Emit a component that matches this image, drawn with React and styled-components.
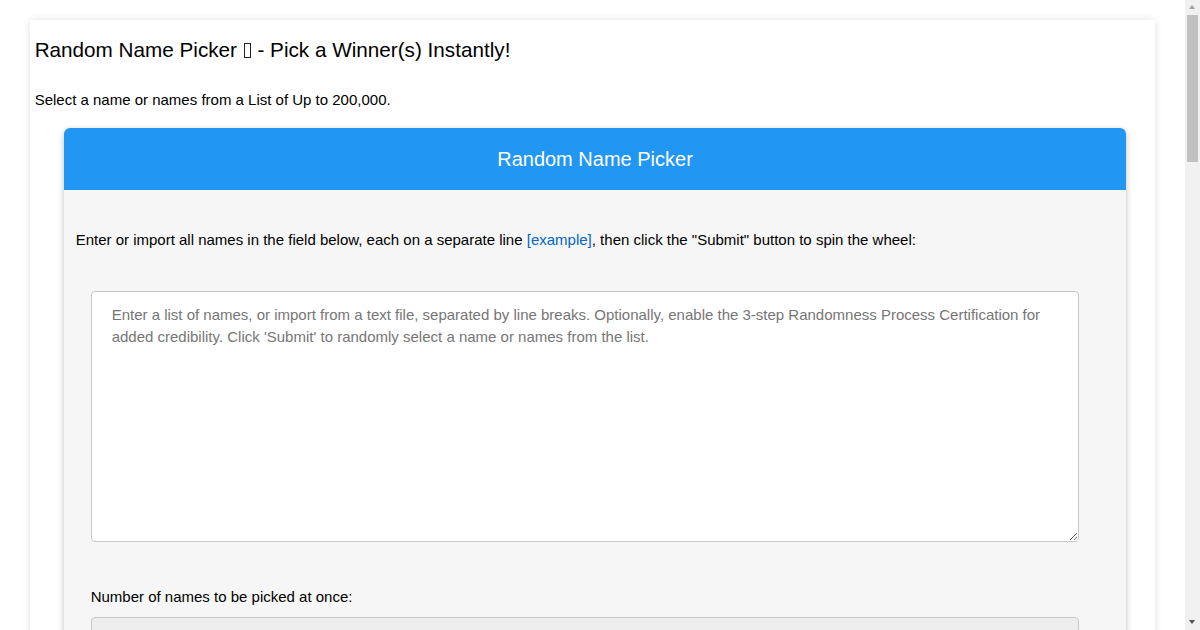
import React from "react";
import styled, { createGlobalStyle } from "styled-components";

const GlobalStyle = createGlobalStyle`
  html, body {
    margin: 0;
    padding: 0;
    background: #ffffff;
    font-family: "Liberation Sans", Arial, sans-serif;
    color: #000;
  }
  body {
    padding-right: 15px;
  }
`;

const Page = styled.div`
  width: 95%;
  margin: 20px auto 40px;
  padding: 12px 5px 30px;
  box-sizing: border-box;
  background: #fff;
  box-shadow: 0 0 8px rgba(0, 0, 0, 0.12);
`;

const Title = styled.h1`
  font-size: 20.7px;
  font-weight: normal;
  line-height: 36px;
  margin: 0 0 22px;
`;

const Tofu = styled.span`
  display: inline-block;
  width: 5px;
  height: 13px;
  border: 1px solid #222;
  vertical-align: -1px;
  margin: 0 1px;
`;

const Lead = styled.p`
  font-size: 15px;
  line-height: 20px;
  margin: 0 0 18px;
`;

const Card = styled.div`
  margin: 0 24px 0 29px;
  border-radius: 6px;
  background: #f6f6f6;
  box-shadow: 0 2px 6px rgba(0, 0, 0, 0.25);
  overflow: hidden;
`;

const CardHeader = styled.div`
  background: #2196f3;
  color: #fff;
  height: 62px;
  display: flex;
  align-items: center;
  justify-content: center;
  font-size: 20px;
`;

const CardBody = styled.div`
  padding: 40px 12px 40px;
`;

const Intro = styled.p`
  font-size: 15px;
  line-height: 20px;
  margin: 0 0 41px;

  a {
    color: #0066cc;
    text-decoration: none;
  }
`;

const Field = styled.div`
  margin: 0 35px 0 15px;
`;

const Names = styled.textarea`
  display: block;
  width: 100%;
  height: 251px;
  box-sizing: border-box;
  padding: 12px 20px;
  border: 1px solid #c8c8c8;
  border-radius: 4px;
  background: #fff;
  font-family: "Liberation Sans", Arial, sans-serif;
  font-size: 15px;
  line-height: 22px;
  resize: vertical;
  outline: none;

  &::placeholder {
    color: #767676;
  }
`;

const Label = styled.label`
  display: block;
  font-size: 15px;
  line-height: 20px;
  margin: 45px 0 10px;
`;

const NumberInput = styled.input`
  display: block;
  width: 100%;
  height: 40px;
  box-sizing: border-box;
  border: 1px solid #c8c8c8;
  border-radius: 4px;
  background: #eeeeee;
  padding: 0 12px;
  font-family: "Liberation Sans", Arial, sans-serif;
  font-size: 15px;
`;

const SubmitButton = styled.button`
  margin-top: 30px;
  padding: 12px 28px;
  border: none;
  border-radius: 4px;
  background: #2196f3;
  color: #fff;
  font-family: "Liberation Sans", Arial, sans-serif;
  font-size: 16px;
`;

/* window scrollbar, drawn over the right edge */
const ScrollTrack = styled.div`
  position: fixed;
  top: 0;
  right: 0;
  width: 15px;
  height: 100vh;
  background: #f1f1f1;
`;

const ScrollThumb = styled.div`
  position: absolute;
  top: 15px;
  left: 2px;
  width: 11px;
  height: 147px;
  background: #c1c1c1;
`;

const Arrow = styled.div`
  position: absolute;
  left: 4px;
  width: 0;
  height: 0;
  border-left: 3.5px solid transparent;
  border-right: 3.5px solid transparent;
  ${(p) =>
    p.$down
      ? `bottom: 6px; border-top: 4px solid #505050;`
      : `top: 5px; border-bottom: 4px solid #a3a3a3;`}
`;

const App = () => {
  return (
    <>
      <GlobalStyle />
      <Page>
        <Title>
          Random Name Picker <Tofu aria-label="🏆" /> - Pick a Winner(s) Instantly!
        </Title>
        <Lead>Select a name or names from a List of Up to 200,000.</Lead>
        <Card>
          <CardHeader>Random Name Picker</CardHeader>
          <CardBody>
            <Intro>
              Enter or import all names in the field below, each on a separate line{" "}
              <a href="#example">[example]</a>, then click the "Submit" button to spin the wheel:
            </Intro>
            <Field>
              <Names placeholder="Enter a list of names, or import from a text file, separated by line breaks. Optionally, enable the 3-step Randomness Process Certification for added credibility. Click 'Submit' to randomly select a name or names from the list." />
              <Label>Number of names to be picked at once:</Label>
              <NumberInput type="number" min="1" />
              <SubmitButton>Submit</SubmitButton>
            </Field>
          </CardBody>
        </Card>
      </Page>
      <ScrollTrack>
        <Arrow />
        <ScrollThumb />
        <Arrow $down />
      </ScrollTrack>
    </>
  );
};

export default App;
